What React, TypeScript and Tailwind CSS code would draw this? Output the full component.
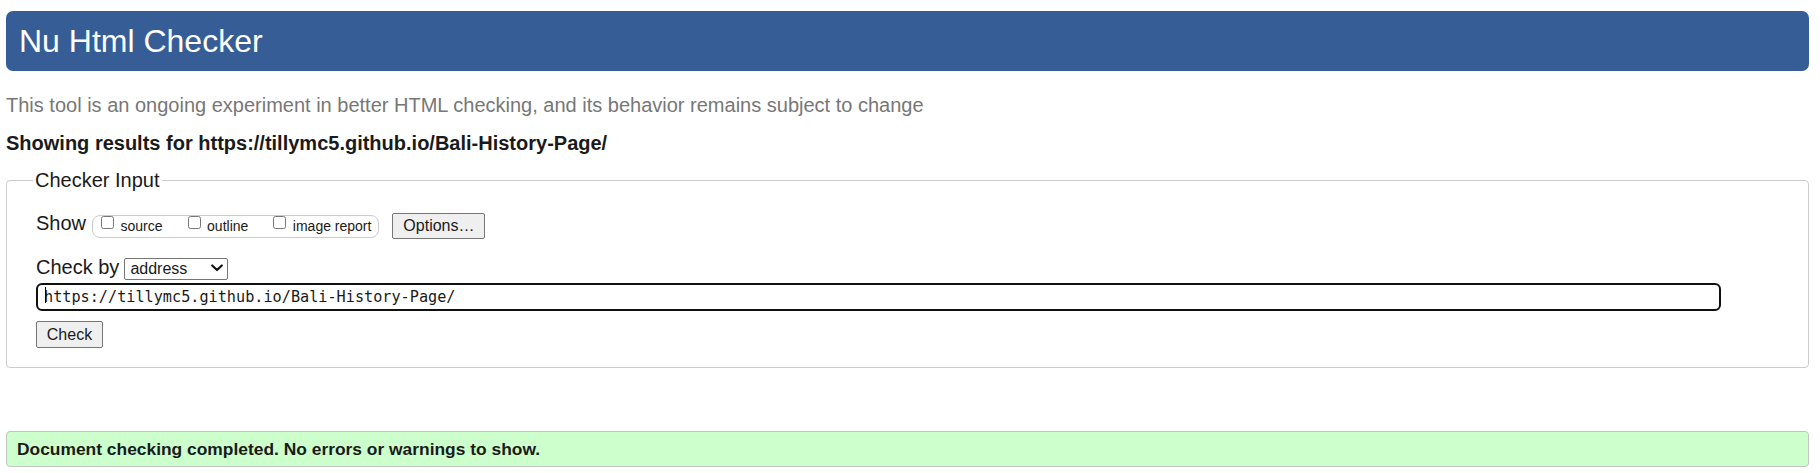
import { useState } from "react";

const checkedUrl = "https://tillymc5.github.io/Bali-History-Page/";

const showOptions = [
  { id: "show-source", label: "source" },
  { id: "show-outline", label: "outline" },
  { id: "show-image-report", label: "image report" },
] as const;

function ShowToggles() {
  return (
    <div className="ml-[6px] flex h-[23px] items-start gap-[21px] rounded-[8px] border border-[#cccccc] pl-[4px] pr-[7px]">
      {showOptions.map((opt) => (
        <label key={opt.id} htmlFor={opt.id} className="flex items-start">
          <input
            id={opt.id}
            type="checkbox"
            className="m-0 ml-[4px] h-[13px] w-[13px]"
          />
          <span className="ml-[6.5px] mt-[3.5px] text-[14px] leading-[15px]">
            {opt.label}
          </span>
        </label>
      ))}
    </div>
  );
}

function ChevronDown() {
  return (
    <svg
      width="12"
      height="8"
      viewBox="0 0 12 8"
      className="pointer-events-none absolute right-[5px] top-1/2 -translate-y-1/2"
      aria-hidden
    >
      <path
        d="M1.2 1.4 6 6.1 10.8 1.4"
        fill="none"
        stroke="#111"
        strokeWidth="2.1"
        strokeLinecap="round"
        strokeLinejoin="round"
      />
    </svg>
  );
}

export default function App() {
  const [mode, setMode] = useState("address");

  return (
    <div className="min-h-screen bg-white pl-[6px] pr-[11px] pt-[11px] font-['Liberation_Sans',Arial,sans-serif] text-[#1a1a1a]">
      <h1 className="rounded-[7px] bg-[#365d95] pb-[11px] pl-[13px] pt-[12px] text-[32px] font-normal leading-[37px] text-white">
        Nu Html Checker
      </h1>

      <p className="mt-[23px] text-[20px] leading-[23px] text-[#777777]">
        This tool is an ongoing experiment in better HTML checking, and its
        behavior remains subject to change
      </p>

      <p className="mt-[15px] text-[20px] font-bold leading-[23px]">
        Showing results for {checkedUrl}
      </p>

      <form onSubmit={(e) => e.preventDefault()}>
        <fieldset className="mt-[14px] rounded-[4px] border border-[#cccccc] pb-[19px] pl-[29px]">
          <legend className="-ml-[3px] px-[2px] text-[20px] leading-[23px]">
            Checker Input
          </legend>

          <div className="mt-[21px] flex h-[26px] items-center">
            <span className="-mt-[1px] self-start text-[20px] leading-[23px]">
              Show
            </span>
            <ShowToggles />
            <button
              type="button"
              className="ml-[13px] h-[26px] w-[93px] rounded-[2px] border border-[#767676] bg-[#efefef] text-[16px] leading-[24px]"
            >
              Options…
            </button>
          </div>

          <div className="mt-[17px] flex items-start">
            <label htmlFor="docselect" className="text-[20px] leading-[23px]">
              Check by
            </label>
            <div className="relative ml-[5px] mt-[1px] h-[22px] w-[104px]">
              <select
                id="docselect"
                value={mode}
                onChange={(e) => setMode(e.target.value)}
                className="h-full w-full appearance-none rounded-[2px] border border-[#767676] bg-white pl-[5px] text-[16px] leading-[20px]"
              >
                <option value="address">address</option>
                <option value="file">file upload</option>
                <option value="textarea">text input</option>
              </select>
              <ChevronDown />
            </div>
          </div>

          <div className="relative mt-[4px] h-[28px] w-[1685px]">
            <input
              type="url"
              readOnly
              value={checkedUrl}
              className="h-full w-full rounded-[6px] border-2 border-[#101010] bg-white pl-[6px] font-['DejaVu_Sans_Mono',monospace] text-[15.2px] text-[#1a1a1a] outline-none"
            />
            <span className="pointer-events-none absolute left-[9px] top-[4px] h-[16px] w-[1px] bg-black" />
          </div>

          <button
            type="submit"
            className="mt-[10px] block h-[27px] w-[67px] rounded-[2px] border border-[#767676] bg-[#efefef] text-[16px] leading-[25px]"
          >
            Check
          </button>
        </fieldset>
      </form>

      <div className="mt-[63px] rounded-[4px] border border-[#c4c4c4] bg-[#ccffcc] pl-[10px] text-[17.4px] font-bold leading-[34px]">
        Document checking completed. No errors or warnings to show.
      </div>
    </div>
  );
}
